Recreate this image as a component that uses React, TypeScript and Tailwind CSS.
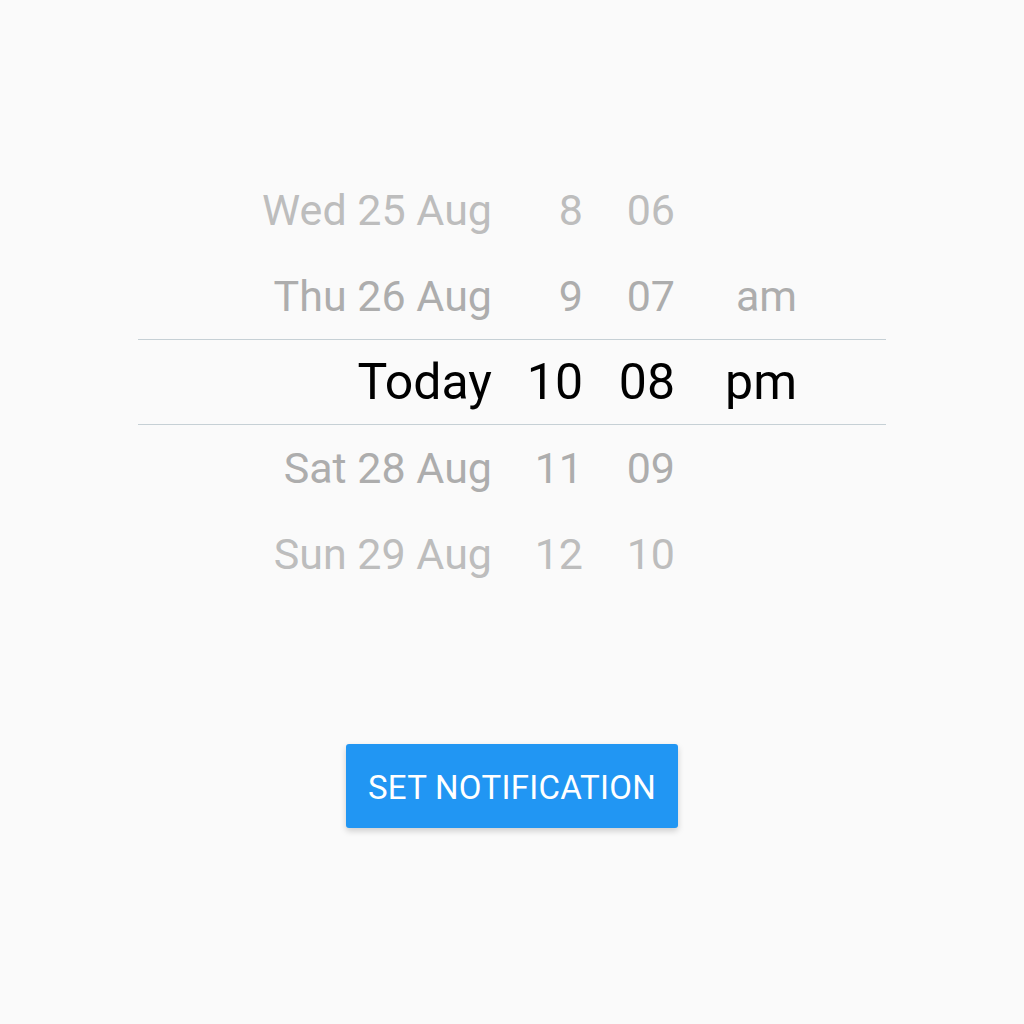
import React from "react";

const rows = [
  { d: "Wed 25 Aug", h: "8", m: "06", p: "", c: "text-[#bdbdbd]" },
  { d: "Thu 26 Aug", h: "9", m: "07", p: "am", c: "text-[#adadad]" },
  { d: "Today", h: "10", m: "08", p: "pm", c: "text-black", sel: true },
  { d: "Sat 28 Aug", h: "11", m: "09", p: "", c: "text-[#adadad]" },
  { d: "Sun 29 Aug", h: "12", m: "10", p: "", c: "text-[#bdbdbd]" },
];

export default function App() {
  return (
    <div className="w-[1024px] h-[1024px] bg-[#fafafa] flex flex-col items-center" style={{ fontFamily: "Roboto, 'Liberation Sans', sans-serif" }}>
      <div className="mt-[167px] w-[748px] flex flex-col">
        {rows.map((r, i) => (
          <div
            key={i}
            className={`flex h-[86px] items-center ${r.c} ${r.sel ? "border-y border-[#c6d0d5] text-[50px]" : "text-[43px]"}`}
          >
            <div className="w-[354px] text-right leading-none">{r.d}</div>
            <div className="w-[91px] text-right leading-none">{r.h}</div>
            <div className="w-[92px] text-right leading-none">{r.m}</div>
            <div className="w-[122px] text-right leading-none">{r.p}</div>
          </div>
        ))}
      </div>
      <button className="mt-[147px] w-[332px] h-[84px] pt-[4px] bg-[#2196f3] rounded-[3px] text-white text-[33px] shadow-[0_3px_6px_rgba(0,0,0,0.18)] tracking-[0.3px]">
        SET NOTIFICATION
      </button>
    </div>
  );
}
